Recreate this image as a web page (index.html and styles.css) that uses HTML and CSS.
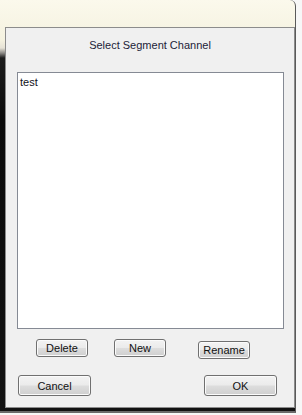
FILE: index.html
```html
<!DOCTYPE html>
<html lang="en">
<head>
    <meta charset="UTF-8">
    <meta name="viewport" content="width=device-width, initial-scale=1.0">
    <title>Select Segment Channel</title>
    <link rel="stylesheet" href="styles.css">
</head>
<body>
    <div class="frame">
        <div class="dialog">
            <div class="title">Select Segment Channel</div>

            <div class="list">
                <div class="item">test</div>
            </div>

            <div class="actions">
                <button class="btn small">Delete</button>
                <button class="btn small new">New</button>
                <button class="btn small rename">Rename</button>
            </div>

            <div class="footer">
                <button class="btn wide">Cancel</button>
                <button class="btn wide">OK</button>
            </div>
        </div>
    </div>
</body>
</html>
```

FILE: styles.css
```css
body {
    margin: 0;
    background-color: #f7f7f7;
    font-family: 'Liberation Sans', Arial, sans-serif;
    font-size: 11px;
}
.frame {
    width: 296px;
    height: 413px;
    padding: 27px 0 0 5px;
    box-sizing: border-box;
    border-right: 1px solid #5a5a5a;
    border-bottom: 2px solid #6a6a6a;
    border-top-right-radius: 6px;
    background: linear-gradient(to bottom, #fbf9ec 0, #f5f2e0 40px, #e6e2d6 48px, #8c8a86 53px, #1c1c1c 58px, #0b0b0b 120px, #121212 100%);
}
.dialog {
    width: 290px;
    height: 381px;
    box-sizing: border-box;
    border: 1px solid #8c8c8c;
    background-color: #f0f0f0;
    display: flex;
    flex-direction: column;
}
.title {
    margin-top: 10px;
    height: 14px;
    line-height: 14px;
    text-align: center;
    color: #1c1c38;
}
.list {
    margin: 20px 0 0 11px;
    width: 267px;
    height: 257px;
    box-sizing: border-box;
    border: 1px solid #858a94;
    background-color: white;
    padding: 3px 2px;
}
.item {
    line-height: 13px;
    color: #101020;
}
.actions {
    display: flex;
    align-items: flex-start;
    margin: 10px 0 0 30px;
}
.btn {
    font-family: 'Liberation Sans', Arial, sans-serif;
    font-size: 11px;
    color: #111;
    padding: 0;
    border: 1px solid #707070;
    border-radius: 3px;
    background: linear-gradient(to bottom, #f3f3f3 0, #ebebeb 48%, #dddddd 52%, #cfcfcf 100%);
    box-shadow: inset 0 0 0 1px #fbfbfb;
}
.small {
    width: 52px;
    height: 18px;
}
.new {
    margin-left: 26px;
}
.rename {
    margin-left: 32px;
    margin-top: 2px;
}
.footer {
    display: flex;
    justify-content: space-between;
    margin-top: 16px;
    padding: 0 17px 0 12px;
}
.wide {
    width: 73px;
    height: 21px;
}
```
